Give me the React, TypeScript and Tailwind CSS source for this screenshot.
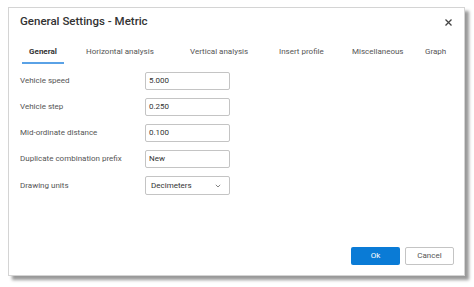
import React from 'react';

// widths chosen so each tab label starts where the screenshot has it
const tabs = [
  { name: 'Horizontal analysis', w: 'w-[104px]' },
  { name: 'Vertical analysis', w: 'w-[89px]' },
  { name: 'Insert profile', w: 'w-[73px]' },
  { name: 'Miscellaneous', w: 'w-[73px]' },
  { name: 'Graph', w: 'w-[30px]' },
];

const fields = [
  { label: 'Vehicle speed', value: '5.000' },
  { label: 'Vehicle step', value: '0.250' },
  { label: 'Mid-ordinate distance', value: '0.100' },
  { label: 'Duplicate combination prefix', value: 'New' },
];

const App: React.FC = () => {
  return (
    <div className="w-[474px] h-[287px] bg-white pt-[7px] pl-[8px]" style={{ fontFamily: 'Roboto, "Liberation Sans", sans-serif' }}>
      <div className="w-[457px] h-[269px] bg-white border border-[#d4d4d4] shadow-[4px_4px_3px_rgba(0,0,0,0.4)] flex flex-col">
        <div className="h-[28px] flex items-center justify-between pl-[11px] pr-[12px]">
          <span className="text-[11.5px] text-[#333] font-medium">General Settings - Metric</span>
          <svg width="7" height="7" viewBox="0 0 7 7" stroke="#444" strokeWidth="1.3">
            <path d="M0.5 0.5l6 6M6.5 0.5l-6 6" />
          </svg>
        </div>
        <div className="flex pl-[13px] pt-[10px] text-[8px] leading-[11px] text-[#555]">
          <div className="w-[42px] text-center pb-[5px] font-bold text-[#333] border-b-2 border-[#5aa2e6]">General</div>
          <div className="w-[22px]" />
          {tabs.map((t) => (
            <div key={t.name} className={`${t.w} whitespace-nowrap`}>
              {t.name}
            </div>
          ))}
        </div>
        <div className="flex flex-col gap-[8px] pl-[11px] pt-[8px] text-[8px] text-[#555]">
          {fields.map((f) => (
            <div key={f.label} className="flex items-center">
              <span className="w-[125px]">{f.label}</span>
              <div className="w-[85px] h-[18px] border border-[#c4c4c4] rounded-[2px] px-[3px] flex items-center text-[#333]">
                {f.value}
              </div>
            </div>
          ))}
          <div className="flex items-center">
            <span className="w-[125px]">Drawing units</span>
            <div className="w-[85px] h-[19px] border border-[#c4c4c4] rounded-[2px] pl-[5px] pr-[8px] flex items-center justify-between text-[#333]">
              <span>Decimeters</span>
              <svg width="6" height="4" viewBox="0 0 6 4" fill="none" stroke="#777" strokeWidth="0.9">
                <path d="M0.8 0.8l2.2 2.2L5.2 0.8" />
              </svg>
            </div>
          </div>
        </div>
        <div className="flex-1" />
        <div className="flex justify-end gap-[5px] pr-[10px] pb-[10px] text-[8px]">
          <button className="w-[49px] h-[18px] bg-[#0a7bd6] text-white rounded-[2px]">Ok</button>
          <button className="w-[49px] h-[18px] bg-white border border-[#c4c4c4] text-[#555] rounded-[2px]">Cancel</button>
        </div>
      </div>
    </div>
  );
};

export default App;
